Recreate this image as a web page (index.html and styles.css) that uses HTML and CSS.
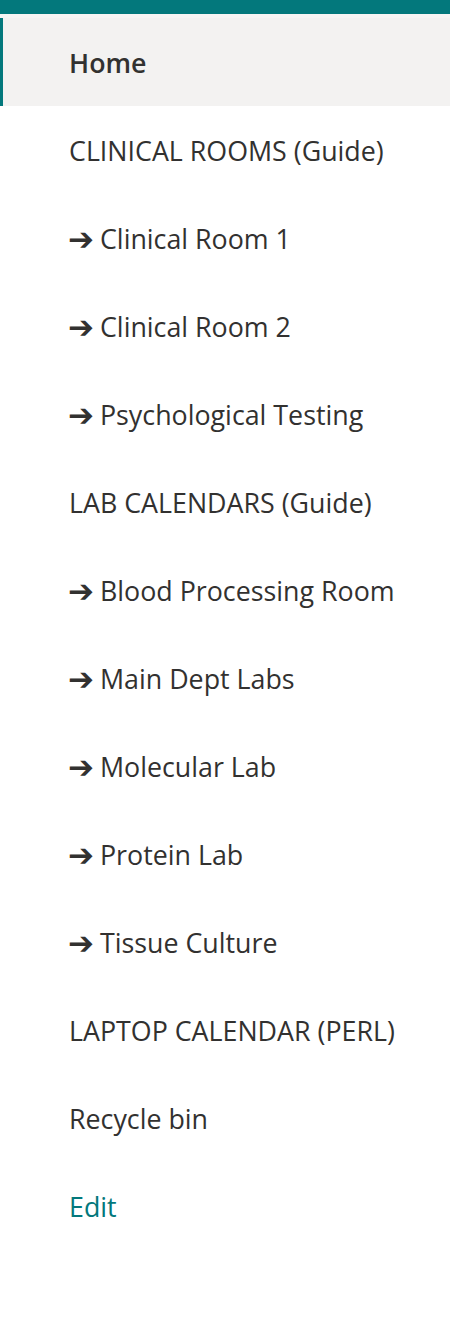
FILE: index.html
```html
<!DOCTYPE html>
<html lang="en">
<head>
<meta charset="utf-8">
<title>Navigation</title>
<link rel="stylesheet" href="styles.css">
</head>
<body>
<div class="topbar"></div>
<div class="strip"></div>
<nav class="nav">
  <a class="item selected" href="#">Home</a>
  <a class="item" href="#">CLINICAL ROOMS (Guide)</a>
  <a class="item" href="#"><span class="arrow">➔</span> Clinical Room 1</a>
  <a class="item" href="#"><span class="arrow">➔</span> Clinical Room 2</a>
  <a class="item" href="#"><span class="arrow">➔</span> Psychological Testing</a>
  <a class="item" href="#">LAB CALENDARS (Guide)</a>
  <a class="item" href="#"><span class="arrow">➔</span> Blood Processing Room</a>
  <a class="item" href="#"><span class="arrow">➔</span> Main Dept Labs</a>
  <a class="item" href="#"><span class="arrow">➔</span> Molecular Lab</a>
  <a class="item" href="#"><span class="arrow">➔</span> Protein Lab</a>
  <a class="item" href="#"><span class="arrow">➔</span> Tissue Culture</a>
  <a class="item" href="#">LAPTOP CALENDAR (PERL)</a>
  <a class="item" href="#">Recycle bin</a>
  <a class="item edit" href="#">Edit</a>
</nav>
</body>
</html>
```
FILE: styles.css
```css
html, body {
  margin: 0;
  padding: 0;
  background: #ffffff;
}
body {
  font-family: "Open Sans", "Noto Sans", "DejaVu Sans", sans-serif;
  color: #323130;
}
.topbar {
  height: 14px;
  background: #03787c;
}
.strip {
  height: 4px;
  background: #f6f5f4;
}
.nav {
  display: flex;
  flex-direction: column;
}
.item {
  display: flex;
  align-items: center;
  height: 88px;
  padding-left: 69px;
  font-size: 26.8px;
  font-weight: 400;
  color: #323130;
  text-decoration: none;
  white-space: nowrap;
}
.item.selected {
  background: #f3f2f1;
  border-left: 3px solid #03787c;
  padding-left: 66px;
  font-weight: 600;
}
.item.edit {
  color: #03787c;
}
.arrow {
  font-family: "DejaVu Sans", sans-serif;
  font-size: 31px;
  font-weight: 700;
  margin-left: -1px;
  margin-right: 6px;
  position: relative;
  top: 1px;
}
```
